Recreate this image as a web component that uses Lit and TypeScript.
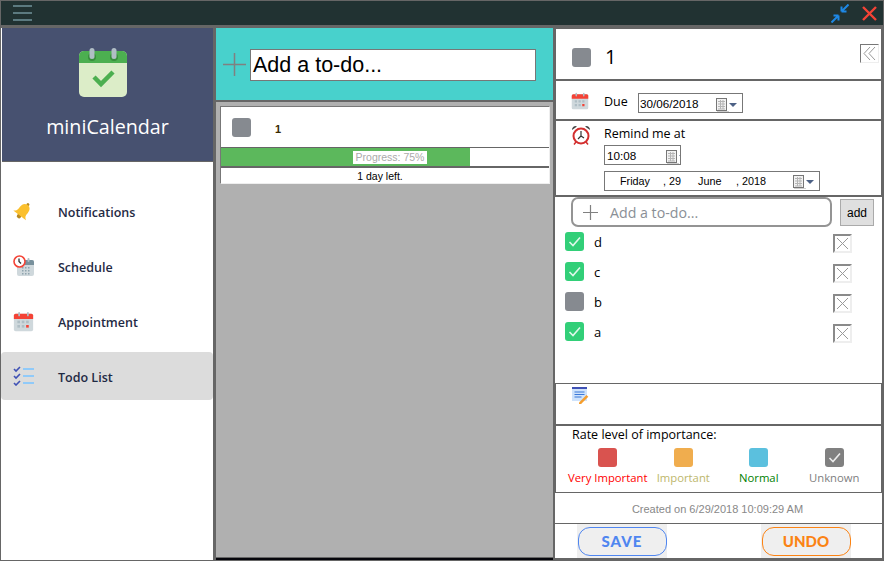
import { LitElement, html, css, svg } from "lit";
import { customElement } from "lit/decorators.js";

const calendarGlyph = svg`
  <rect x="1" y="3" width="22" height="20" rx="2" fill="#cfd8dc"/>
  <path d="M1 9V5a2 2 0 0 1 2-2h18a2 2 0 0 1 2 2v4z" fill="#f44336"/>
  <rect x="6" y="1" width="2" height="5" rx="1" fill="#b0bec5"/>
  <rect x="16" y="1" width="2" height="5" rx="1" fill="#b0bec5"/>
  <g fill="#b0bec5">
    <rect x="5" y="11" width="3" height="3"/><rect x="10" y="11" width="3" height="3"/><rect x="15" y="11" width="3" height="3"/>
    <rect x="5" y="16" width="3" height="3"/><rect x="10" y="16" width="3" height="3"/>
  </g>
  <rect x="15" y="16" width="3" height="3" fill="#f44336"/>`;

const pickerIcon = html`<svg class="picker" width="24" height="14" viewBox="0 0 24 14">
  <path d="M2 2h2v11h10v1H2z" fill="#bbb" opacity=".7"/>
  <rect x="1.500" y=".5" width="10" height="12" fill="#f2f2f2" stroke="#777"/>
  <path d="M3 3.500h7M3 6h7M3 8.500h7M3 11h7M5.500 2v9M8 2v9" stroke="#b5b5b5" fill="none"/>
  <path d="M14 5h8l-4 4z" fill="#4d6185"/>
</svg>`;

const tick = html`<svg width="19" height="19" viewBox="0 0 19 19"><path d="M4.500 10l3.500 3.500 7-8" fill="none" stroke="#fff" stroke-width="1.600" opacity=".85"/></svg>`;

const closeBox = html`<span class="x-box"><svg width="17" height="17" viewBox="0 0 17 17"><path d="M3 3l11 11M14 3L3 14" stroke="#999" stroke-width="1"/></svg></span>`;

@customElement("app-root")
export class AppRoot extends LitElement {
  static styles = css`
    :host {
      display: block;
      width: 884px;
      height: 561px;
      font-family: "Open Sans", "Noto Sans", sans-serif;
      color: #000;
    }
    * { box-sizing: border-box; }
    .frame {
      width: 884px;
      height: 561px;
      background: #666;
      padding: 1px 1px 1px 1px;
      display: flex;
      flex-direction: column;
    }
    .titlebar {
      height: 24px;
      background: #213232;
      display: flex;
      align-items: center;
      flex: none;
      padding: 0 6px 0 12px;
    }
    .burger { display: flex; flex-direction: column; gap: 5px; width: 19px; }
    .burger i { height: 2px; background: #5c7a80; display: block; }
    .spacer { flex: 1; }
    .titlebar .shrink { margin-right: 13px; }
    .body {
      flex: 1;
      display: flex;
      margin-top: 3px;
      min-height: 0;
    }
    .side {
      width: 212px;
      flex: none;
      background: #fff;
      display: flex;
      flex-direction: column;
    }
    .brand {
      height: 134px;
      margin-left: 1px;
      background: #475170;
      display: flex;
      flex-direction: column;
      align-items: center;
      padding-top: 20px;
      border-bottom: 1px solid #666;
      flex: none;
    }
    .brand svg { margin-right: 10px; }
    .brand .name {
      color: #fff;
      font-size: 19.700px;
      line-height: 27px;
      margin-top: 15px;
    }
    .nav {
      flex: 1;
      padding-top: 25px;
      display: flex;
      flex-direction: column;
      gap: 7px;
    }
    .nav-item {
      height: 48px;
      display: flex;
      align-items: center;
      font-size: 12.500px;
      font-weight: 600;
      color: #1f2a44;
      border-radius: 4px;
    }
    .nav-item.active { background: #dcdcdc; }
    .nav-item .ico { width: 57px; padding-left: 12px; display: flex; }
    .nav-item .lbl { padding-top: 2px; }
    .mid {
      width: 337px;
      flex: none;
      margin-left: 3px;
      display: flex;
      flex-direction: column;
    }
    .quick {
      height: 72px;
      background: #48d1cc;
      display: flex;
      align-items: center;
      padding: 0 17px 0 7px;
      flex: none;
      gap: 4px;
    }
    .quick .field {
      flex: 1;
      height: 32px;
      margin-top: 1px;
      background: #fff;
      border: 1px solid #777;
      font-family: "Liberation Sans", sans-serif;
      font-size: 21.500px;
      line-height: 31px;
      padding-left: 2px;
    }
    .list {
      flex: 1;
      margin-top: 2px;
      background: #b0b0b0;
      padding: 4px 3px 0 4px;
    }
    .mid-foot { height: 2px; margin-top: 1px; background: #06060c; flex: none; }
    .card {
      background: #fff;
      border: 1px solid #eee;
      border-top: 1px solid #777;
      border-left: 1px solid #777;
      font-family: "Liberation Sans", sans-serif;
    }
    .card .top {
      height: 40px;
      display: flex;
      align-items: center;
      padding-left: 11px;
      font-size: 11px;
      font-weight: 700;
      color: #3a2a00;
    }
    .card .top .num { margin-left: 24px; margin-top: 3px; }
    .bar {
      height: 21px;
      border-top: 1px solid #666;
      border-bottom: 2px solid #666;
      position: relative;
      display: flex;
      justify-content: center;
      align-items: center;
    }
    .bar .fill { position: absolute; left: 0; top: 0; bottom: 0; background: #5cb85c; }
    .bar .label {
      position: relative;
      margin-left: 10px;
      background: #fff;
      color: #aaa;
      font-size: 10.500px;
      line-height: 13px;
      width: 74px;
      text-align: center;
    }
    .left {
      height: 15px;
      text-align: center;
      font-size: 10.500px;
      line-height: 17px;
      padding-right: 10px;
    }
    .box {
      width: 19px;
      height: 19px;
      border-radius: 3px;
      background: #868a90;
      flex: none;
      display: block;
    }
    .box.done { background: #32cf78; }
    .detail {
      width: 327px;
      height: 529px;
      flex: none;
      margin: 1px 0 0 2px;
      display: flex;
      flex-direction: column;
      gap: 2px;
    }
    .sect { background: #fff; flex: none; }
    .inset { margin: 0 1px; }
    .tight { margin-top: -1px; }
    .head { height: 50px; display: flex; align-items: center; padding-left: 16px; position: relative; font-size: 20px; }
    .head .box { margin: 7px 14px 0 0; }
    .head .title { margin-top: 5px; }
    .collapse {
      position: absolute;
      right: 2px;
      top: 15px;
      width: 19px;
      height: 19px;
      border: 1px solid #eee;
      border-top-color: #777;
      border-left-color: #777;
      display: flex;
    }
    .due { height: 38px; display: flex; padding: 11px 0 0 15px; font-size: 12.500px; }
    .lbl-due { margin: 1px 0 0 15px; width: 34px; line-height: 18px; }
    .date {
      border: 1px solid #777;
      height: 20px;
      display: flex;
      align-items: center;
      overflow: hidden;
      font-family: "Liberation Sans", sans-serif;
      font-size: 11.700px;
      padding-left: 1px;
      background: #fff;
    }
    .date .val { flex: 1; }
    .date .picker { flex: none; margin-top: 3px; margin-right: 3px; }
    .date.clip { padding-left: 2px; }
    .date.clip .picker { margin-right: -9px; }
    .due .date { margin-top: 1px; }
    .remind { height: 74px; display: flex; padding: 4px 0 0 15px; font-size: 12.500px; }
    .remind .col { margin-left: 13px; display: flex; flex-direction: column; }
    .remind .line { line-height: 17px; }
    .remind .date { margin-top: 3px; }
    .remind .date.long { margin-top: 6px; width: 216px; padding-left: 15px; padding-bottom: 1px; font-size: 10.800px; }
    .long .seg { display: block; flex: none; white-space: pre; }
    .long .d1 { width: 43px; }
    .long .d2 { width: 35px; }
    .long .d3 { width: 38px; }
    .long .d4 { flex: 1; }
    .todos { height: 186px; padding: 0 0 0 10px; }
    .todo-add { display: flex; align-items: flex-start; height: 29px; }
    .todo-field {
      margin-left: 6px;
      width: 261px;
      height: 30px;
      flex: none;
      border: 2px solid #949494;
      border-radius: 7px;
      display: flex;
      align-items: center;
      padding-left: 10px;
      font-size: 14.200px;
      color: #8a8f96;
      gap: 12px;
    }
    .add-btn {
      margin: 2px 0 0 8px;
      width: 34px;
      height: 27px;
      background: #dfdfdf;
      border: 1px solid #aaa;
      font-family: "Liberation Sans", sans-serif;
      font-size: 12px;
      display: flex;
      align-items: center;
      justify-content: center;
    }
    .todo-row {
      height: 30px;
      display: flex;
      align-items: center;
      font-size: 13px;
    }
    .todo-row .txt { margin: 1px 0 0 10px; flex: 1; }
    .x-box {
      width: 19px;
      height: 19px;
      margin: 4px 30px 0 0;
      border: 2px solid #eee;
      border-top-color: #8a8a8a;
      border-left-color: #8a8a8a;
      display: flex;
      align-items: center;
      justify-content: center;
    }
    .x-box svg { flex: none; }
    .note { height: 40px; padding: 2px 0 0 15px; }
    .rate { height: 66px; padding-left: 16px; font-size: 12.500px; }
    .rate .t { line-height: 17px; }
    .levels { display: flex; margin: 5px 0 0 -2px; }
    .level {
      display: flex;
      flex-direction: column;
      align-items: center;
      font-size: 11.300px;
      line-height: 16px;
      gap: 3px;
      width: 75.500px;
      white-space: nowrap;
    }
    .level .box { display: flex; }
    .created {
      height: 30px;
      padding-right: 2px;
      text-align: center;
      font-family: "Liberation Sans", sans-serif;
      font-size: 11px;
      line-height: 32px;
      color: #888;
    }
    .actions {
      height: 34px;
      display: flex;
      justify-content: space-between;
      padding: 0 31px 0 22px;
    }
    .act {
      width: 90px;
      background: #efefef;
      height: 34px;
      display: flex;
      justify-content: center;
      padding-top: 3px;
    }
    .act span {
      width: 89px;
      height: 29px;
      border: 1px solid;
      border-radius: 12px;
      background: #efefef;
      padding-bottom: 2px;
      display: flex;
      align-items: center;
      justify-content: center;
      font-family: "Lato", sans-serif;
      font-weight: 900;
      font-size: 15px;
      letter-spacing: 1px;
    }
    .save span { color: #4f86f0; border-color: #4f86f0; }
    .undo span { color: #fb8314; border-color: #fb8314; letter-spacing: 0; }
  `;

  todos = [
    { text: "d", done: true },
    { text: "c", done: true },
    { text: "b", done: false },
    { text: "a", done: true },
  ];

  levels = [
    { label: "Very Important", color: "#d9534f", text: "#ff0000" },
    { label: "Important", color: "#f0ad4e", text: "#bdb76b" },
    { label: "Normal", color: "#5bc0de", text: "#008000" },
    { label: "Unknown", color: "#808080", text: "#808080", checked: true },
  ];

  render() {
    return html`
      <div class="frame">
        <div class="titlebar">
          <div class="burger"><i></i><i></i><i></i></div>
          <div class="spacer"></div>
          <svg class="shrink" width="18" height="19" viewBox="0 0 18 19">
            <path d="M.5 18.500l7-7M7.500 11.500H2.500M7.500 11.500v5M17.500.5l-7 7M10.500 7.500h5M10.500 7.500v-5" fill="none" stroke="#1e88e5" stroke-width="2"/>
          </svg>
          <svg width="15" height="15" viewBox="0 0 15 15"><path d="M1 1l13 13M14 1L1 14" stroke="#f44336" stroke-width="2.400"/></svg>
        </div>
        <div class="body">
          <aside class="side">
            <div class="brand">
              <svg width="48" height="50" viewBox="0 0 48 50">
                <rect x="0" y="3" width="48" height="46" rx="5" fill="#dcedc8"/>
                <path d="M0 15V8a5 5 0 0 1 5-5h38a5 5 0 0 1 5 5v7z" fill="#4caf50"/>
                <circle cx="13" cy="9" r="4" fill="#388e3c"/><circle cx="35" cy="9" r="4" fill="#388e3c"/>
                <rect x="10.500" y="0" width="5" height="11" rx="2.500" fill="#b0bec5"/>
                <rect x="32.500" y="0" width="5" height="11" rx="2.500" fill="#b0bec5"/>
                <path d="M15 29l7 7 12-12" fill="none" stroke="#4caf50" stroke-width="4.500"/>
              </svg>
              <div class="name">miniCalendar</div>
            </div>
            <nav class="nav">
              <div class="nav-item">
                <span class="ico"><svg width="20" height="20" viewBox="0 0 20 20">
                  <g transform="rotate(38 10 10)">
                    <circle cx="10" cy="2" r="1.500" fill="#b98a20"/>
                    <circle cx="10" cy="16.500" r="2.200" fill="#b98a20"/>
                    <path d="M10 2.500c-3.500 0-5 2.500-5 6v2.500c0 2-1 3-3 4.500h16c-2-1.500-3-2.500-3-4.500V8.500c0-3.500-1.500-6-5-6z" fill="#fbc02d"/>
                  </g>
                </svg></span><span class="lbl">Notifications</span>
              </div>
              <div class="nav-item">
                <span class="ico"><svg width="21" height="22" viewBox="0 0 21 22">
                  <rect x="4" y="5" width="17" height="16" rx="2" fill="#cfd8dc"/>
                  <path d="M4 10V7a2 2 0 0 1 2-2h13a2 2 0 0 1 2 2v3z" fill="#78909c"/>
                  <path d="M9 12h1.500v1.500H9zM12 12h1.500v1.500H12zM15 12h1.500v1.500H15zM9 15h1.500v1.500H9zM12 15h1.500v1.500H12zM15 15h1.500v1.500H15zM9 18h1.500v1.500H9zM12 18h1.500v1.500H12zM15 18h1.500v1.500H15z" fill="#90a4ae"/>
                  <rect x="14.500" y="3" width="2" height="4" rx="1" fill="#b0bec5"/>
                  <circle cx="6.500" cy="6.500" r="5.500" fill="#fff" stroke="#f44336" stroke-width="1.600"/>
                  <path d="M6 3.500v3l2 2" fill="none" stroke="#333" stroke-width="1.300"/>
                </svg></span><span class="lbl">Schedule</span>
              </div>
              <div class="nav-item">
                <span class="ico"><svg width="21" height="21" viewBox="0 0 24 24">${calendarGlyph}</svg></span><span class="lbl">Appointment</span>
              </div>
              <div class="nav-item active">
                <span class="ico"><svg width="21" height="20" viewBox="0 0 21 20">
                  <path d="M1 3l2 2 4-4M1 10l2 2 4-4M1 17l2 2 4-4" fill="none" stroke="#3f51b5" stroke-width="1.600"/>
                  <path d="M10 3h11M10 10h11M10 17h11" stroke="#90caf9" stroke-width="2"/>
                </svg></span><span class="lbl">Todo List</span>
              </div>
            </nav>
          </aside>
          <section class="mid">
            <div class="quick">
              <svg width="23" height="23" viewBox="0 0 23 23"><path d="M11.500 0v23M0 11.500h23" stroke="#808080" stroke-width="1.500"/></svg>
              <div class="field">Add a to-do...</div>
            </div>
            <div class="list">
              <div class="card">
                <div class="top"><span class="box"></span><span class="num">1</span></div>
                <div class="bar"><div class="fill" style="width:76%"></div><span class="label">Progress: 75%</span></div>
                <div class="left">1 day left.</div>
              </div>
            </div>
            <div class="mid-foot"></div>
          </section>
          <section class="detail">
            <div class="sect head inset">
              <span class="box"></span><span class="title">1</span>
              <span class="collapse"><svg width="17" height="17" viewBox="0 0 17 17"><path d="M9 2L3 8.500 9 15M14 2L8 8.500 14 15" fill="none" stroke="#999"/></svg></span>
            </div>
            <div class="sect due inset">
              <svg width="18" height="18" viewBox="0 0 24 24">${calendarGlyph}</svg>
              <span class="lbl-due">Due</span>
              <div class="date" style="width:105px"><span class="val">30/06/2018</span>${pickerIcon}</div>
            </div>
            <div class="sect remind inset">
              <svg width="20" height="20" viewBox="0 0 20 20">
                <path d="M5 17l-2 2.500M15 17l2 2.500" stroke="#d32f2f" stroke-width="1.500"/>
                <circle cx="10" cy="11" r="7.500" fill="#fff" stroke="#d32f2f" stroke-width="2"/>
                <path d="M10 6v5l-3 3M10 11l3 2" fill="none" stroke="#333" stroke-width="1.200"/>
                <path d="M1 5a3.500 3.500 0 0 1 5-3.500zM19 5a3.500 3.500 0 0 0-5-3.500z" fill="#444"/>
              </svg>
              <div class="col">
                <div class="line">Remind me at</div>
                <div class="date clip" style="width:77px"><span class="val">10:08</span>${pickerIcon}</div>
                <div class="date long">
                  <span class="seg d1">Friday</span><span class="seg d2">, 29</span><span class="seg d3">June</span><span class="seg d4">, 2018</span>${pickerIcon}
                </div>
              </div>
            </div>
            <div class="sect todos">
              <div class="todo-add">
                <div class="todo-field">
                  <svg width="15" height="15" viewBox="0 0 15 15"><path d="M7.500 0v15M0 7.500h15" stroke="#808080" stroke-width="1.200"/></svg>
                  Add a to-do...
                </div>
                <div class="add-btn">add</div>
              </div>
              ${this.todos.map(
                (t) => html`<div class="todo-row">
                  <span class="box ${t.done ? "done" : ""}">${t.done ? tick : ""}</span>
                  <span class="txt">${t.text}</span>
                  ${closeBox}
                </div>`
              )}
            </div>
            <div class="sect note inset tight">
              <svg width="18" height="18" viewBox="0 0 18 18">
                <rect x="1" y="1" width="15" height="14" fill="#cfe3fb"/>
                <rect x="1" y="1" width="15" height="2" fill="#3f51b5"/>
                <path d="M3.500 6h10M3.500 8.500h10M3.500 11h7" stroke="#3b78d8" stroke-width="1.200"/>
                <path d="M8 16.500l7.500-7.500 1.800 1.800-7.500 7.500H8z" fill="#f59e2e"/>
              </svg>
            </div>
            <div class="sect rate inset">
              <div class="t">Rate level of importance:</div>
              <div class="levels">
                ${this.levels.map(
                  (l) => html`<div class="level" style="color:${l.text}">
                    <span class="box" style="background:${l.color}">${l.checked ? tick : ""}</span>
                    ${l.label}
                  </div>`
                )}
              </div>
            </div>
            <div class="sect created tight">Created on 6/29/2018 10:09:29 AM</div>
            <div class="sect actions tight">
              <div class="act save"><span>SAVE</span></div>
              <div class="act undo"><span>UNDO</span></div>
            </div>
          </section>
        </div>
      </div>
    `;
  }
}
